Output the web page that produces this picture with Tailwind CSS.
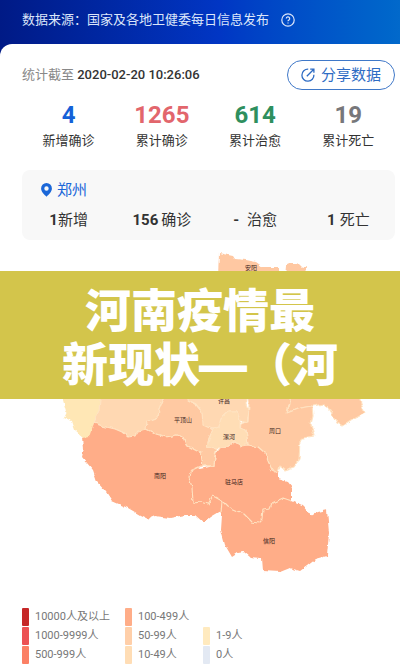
<!DOCTYPE html>
<html lang="zh-CN">
<head>
    <meta charset="UTF-8">
    <meta name="viewport" content="width=device-width, initial-scale=1.0">
    <title>河南疫情最新现状</title>
    <script src="https://cdn.jsdelivr.net/npm/@tailwindcss/browser@4"></script>
</head>
<body class="min-h-screen bg-white font-[Roboto,'Noto_Sans_CJK_SC',sans-serif] text-[#333]">
    <!-- Header -->
    <header class="h-14 bg-linear-to-r from-[#001a86] via-[#0136c4] via-55% to-[#0269cb] px-[22px] pt-[10px]">
        <div class="flex items-center gap-3 text-[13px] leading-5 text-[#dce6fa]">
            <p>数据来源：国家及各地卫健委每日信息发布</p>
            <button type="button" aria-label="说明">
                <svg class="block size-[14px]" viewBox="0 0 14 14" fill="none" stroke="currentColor" stroke-width="1.2">
                    <circle cx="7" cy="7" r="6.2" />
                    <path d="M5.3 5.6a1.7 1.7 0 1 1 2.5 1.5c-.6.3-.8.6-.8 1.2M7 9.4v1.2" />
                </svg>
            </button>
        </div>
    </header>

    <main class="relative -mt-3 rounded-tl-xl bg-white pt-4">
        <!-- Waktu data dan tombol bagikan -->
        <div class="flex items-center justify-between pr-[5px] pl-[22px]">
            <p class="text-[13px] leading-5 text-[#888]">统计截至 <time class="font-medium text-[#333]">2020-02-20 10:26:06</time></p>
            <button type="button" class="flex h-[30px] items-center gap-[6px] rounded-full border border-[#3f78c8] px-[13px] text-[15px] text-[#2e6cc4]">
                <svg class="size-[14px]" viewBox="0 0 14 14" fill="none" stroke="currentColor" stroke-width="1.3">
                    <path d="M7.200 1.200A6 6 0 1 0 12.900 6.800M5.800 8.200 12.800 1.200M9.200 1.100h3.700v3.700" />
                </svg>
                分享数据
            </button>
        </div>

        <!-- Total provinsi -->
        <ul class="mt-[11px] grid grid-cols-4 pr-[5px] pl-[22px] text-center text-[13px] leading-5">
            <li><strong class="block text-2xl leading-7 font-bold text-[#1461d8]">4</strong><span class="block pt-[2px]">新增确诊</span></li>
            <li><strong class="block text-2xl leading-7 font-bold text-[#e2666c]">1265</strong><span class="block pt-[2px]">累计确诊</span></li>
            <li><strong class="block text-2xl leading-7 font-bold text-[#2e8f5e]">614</strong><span class="block pt-[2px]">累计治愈</span></li>
            <li><strong class="block text-2xl leading-7 font-bold text-[#77777a]">19</strong><span class="block pt-[2px]">累计死亡</span></li>
        </ul>

        <!-- Data kota -->
        <section class="mt-[19px] mr-[5px] ml-[22px] rounded-lg bg-[#f8f8f8] pt-2 pb-[6px]">
            <h2 class="flex items-center gap-[5px] pl-[19px] text-[15px] leading-6 text-[#1b67d8]">
                <svg class="h-[14px] w-[11px]" viewBox="0 0 11 14">
                    <path fill="currentColor" fill-rule="evenodd" d="M5.500 0A5.400 5.400 0 0 0 .1 5.400C.1 8.800 3.200 11 5.500 13.800 7.800 11 10.900 8.800 10.900 5.400A5.400 5.400 0 0 0 5.500 0Zm0 3.300a2.200 2.200 0 1 1 0 4.400 2.200 2.200 0 0 1 0-4.400Z" />
                </svg>
                郑州
            </h2>
            <ul class="mt-1 grid grid-cols-4 text-center text-[15px] leading-7">
                <li><b>1</b>新增</li>
                <li><b class="mr-[3px]">156</b>确诊</li>
                <li><b class="mr-2">-</b>治愈</li>
                <li><b class="mr-1">1</b>死亡</li>
            </ul>
        </section>

        <!-- Peta Henan -->
        <section class="relative">
            <svg class="block w-full" viewBox="0 240 400 363" role="img" aria-label="河南疫情地图">
                <!-- Garis batas dibuat tidak rata -->
                <filter id="rough" filterUnits="userSpaceOnUse" x="0" y="240" width="400" height="362">
                    <feTurbulence type="fractalNoise" baseFrequency="0.16" numOctaves="2" seed="4" />
                    <feDisplacementMap in="SourceGraphic" scale="4" xChannelSelector="R" yChannelSelector="G" />
                </filter>
                <g filter="url(#rough)" stroke="#ffe3c2" stroke-width="1.1" stroke-linejoin="round">
                    <!-- 安阳 -->
                    <path fill="#ffc8a2" stroke="none" d="M219 253 223 254 233 256 235 259 246 260 256 262 263 267 278 267V276H218Z" />
                    <path fill="#ffc8a2" stroke="none" d="M285 276 286 266 290 263 297 263 302 268 307 266 306 276Z" />
                    <!-- 三门峡 -->
                    <path fill="#ffe7b5" stroke="none" d="M63 395V400L66 411 63 417 72 421 75 430 85 439 90 438 94 423 99 410 101 395Z" />
                    <!-- 洛阳 -->
                    <path fill="#ffd8b2" d="M101 390 99 410 94 423 102 426 115 429 122 432 128 437 135 436 138 432 147 429 147 422 158 418 159 410 163 400 164 390Z" />
                    <!-- 平顶山 -->
                    <path fill="#ffc9a2" d="M164 390 163 400 159 410 158 418 147 422 146 429 156 434 166 437 177 435 183 437 186 445 195 450 201 453 203 466 214 466 215 455 217 448 207 447 209 438 213 430 205 425 202 412 196 405 189 400 188 390Z" />
                    <!-- 许昌 -->
                    <path fill="#ffd8b2" d="M188 390V400L196 404 202 412 203 425 212 429 219 427 221 418 229 411 237 411 240 421 247 423 249 412 246 405V390Z" />
                    <!-- 商丘 -->
                    <path fill="#ffc9a2" d="M290 390V404L287 413 300 408 313 406 323 404 330 410 337 423 343 426 354 419 365 413 361 404 358 390Z" />
                    <!-- 周口 -->
                    <path fill="#ffc9a2" d="M246 390 249 405 248 422 242 423 240 428 246 430 248 445 258 447 265 453 268 461 272 470 278 473 280 466 285 470 294 467 299 460 300 441 303 438 314 436 311 424 313 416 312 406 300 408 287 413 290 400V390Z" />
                    <!-- 漯河 -->
                    <path fill="#ffddb5" d="M213 429 219 427 221 418 229 411 237 411 240 421 240 428 246 430 248 445 241 446 235 442 228 446 218 448 207 447 209 439Z" />
                    <!-- 南阳 -->
                    <path fill="#ffad88" stroke="none" d="M94 423 102 426 115 429 122 432 128 437 135 436 138 431 146 429 156 434 166 437 177 435 183 437 186 445 195 450 201 453 203 466 198 468 220 480 222 500 221 511 211 517 204 523 195 515 185 515 170 518 155 516 148 519 140 515 128 508 112 501 106 492 97 482 93 470 87 463 82 457 84 448 83 438 89 437Z" />
                    <path fill="none" d="M94 423 102 426 115 429 122 432 128 437 135 436 138 431 146 429 156 434 166 437 177 435 183 437 186 445 195 450 201 453 203 466" />
                    <!-- 信阳 -->
                    <path fill="#ffad88" stroke="none" d="M222 501 228 507 235 508 283 495 292 501 303 506 311 516 318 512 327 510 329 533 327 556 316 559 307 566 300 571 290 568 280 572 263 571 262 558 250 557 244 552 238 553 232 557 225 545 221 530 222 515Z" />
                    <!-- 驻马店 -->
                    <path fill="#ffad88" stroke="none" d="M214 466 216 453 221 447 228 446 235 442 241 446 248 445 258 447 265 453 268 461 272 470 278 472 278 479 288 482 292 487 292 501 263 520 252 522 193 503 190 471Z" />
                    <path fill="none" d="M292 501 283 498 272 503 270 508 263 509 262 519 258 523 252 522 244 514 235 510 228 507 222 501 213 496 208 504 201 502 193 503 192 487 189 478 190 471 201 466 214 466 216 453 221 447 228 446 235 442 241 446 248 445 258 447 265 453 268 461 272 470 278 473" />
                    <path fill="none" d="M222 501 221 513" />
                </g>
                <g class="text-[6px]" fill="#3d241b" text-anchor="middle">
                    <text x="251" y="270">安阳</text>
                    <text x="183" y="422">平顶山</text>
                    <text x="224" y="403">许昌</text>
                    <text x="229" y="439">漯河</text>
                    <text x="275" y="433">周口</text>
                    <text x="160" y="478">南阳</text>
                    <text x="234" y="484">驻马店</text>
                    <text x="269" y="543">信阳</text>
                </g>
            </svg>

            <!-- Judul -->
            <h1 class="absolute inset-x-0 top-[31px] bg-[#d3c54b] pt-[9px] pb-[11px] text-center font-['Noto_Sans_CJK_SC',sans-serif] text-[46px] leading-[54px] font-black text-white">河南疫情最<br>新现状<span class="font-['Liberation_Sans'] leading-none [-webkit-text-stroke:2px_white]">—</span>（河</h1>
        </section>

        <!-- Legenda -->
        <ul class="grid w-max grid-flow-col grid-cols-[103px_78px_auto] grid-rows-3 gap-y-[1px] pt-[5px] pb-2 pl-[22px] text-[11px] leading-[18px] text-[#777]">
            <li class="flex gap-[6px]"><i class="w-[7px] rounded-[1px] bg-[#c62828]"></i>10000人及以上</li>
            <li class="flex gap-[6px]"><i class="w-[7px] rounded-[1px] bg-[#ec5254]"></i>1000-9999人</li>
            <li class="flex gap-[6px]"><i class="w-[7px] rounded-[1px] bg-[#fb8065]"></i>500-999人</li>
            <li class="flex gap-[6px]"><i class="w-[7px] rounded-[1px] bg-[#ffad88]"></i>100-499人</li>
            <li class="flex gap-[6px]"><i class="w-[7px] rounded-[1px] bg-[#ffcfa9]"></i>50-99人</li>
            <li class="flex gap-[6px]"><i class="w-[7px] rounded-[1px] bg-[#ffddb5]"></i>10-49人</li>
            <li class="row-start-2 flex gap-[6px]"><i class="w-[7px] rounded-[1px] bg-[#ffeabf]"></i>1-9人</li>
            <li class="flex gap-[6px]"><i class="w-[7px] rounded-[1px] bg-[#e3e9f3]"></i>0人</li>
        </ul>
    </main>
</body>
</html>
